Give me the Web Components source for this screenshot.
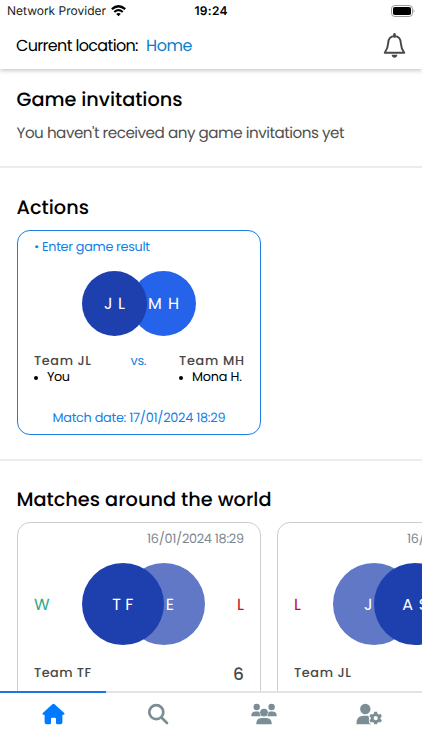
<!DOCTYPE html>
<html lang="en">
<head>
<meta charset="utf-8">
<meta name="viewport" content="width=device-width, initial-scale=1">
<title>Home</title>
<style>
  html, body {
    margin: 0;
    height: 100%;
    overflow: hidden;
    background: #fff;
  }
  body {
    font-family: Poppins, Inter, "Open Sans", sans-serif;
    text-rendering: geometricPrecision;
    color: #000;
  }
</style>
</head>
<body>
<home-screen></home-screen>

<script>
// Text line tracked out (or in) to a given width
class TextLine extends HTMLElement {
  constructor() {
    super();
    this.attachShadow({ mode: 'open' });
    this.shadowRoot.innerHTML = `
      <style>
        :host { display: block; flex: none; }
        span { display: block; width: max-content; white-space: pre; }
      </style>
      <span><slot></slot></span>
    `;
  }

  connectedCallback() {
    const width = parseFloat(this.getAttribute('width'));
    const span = this.shadowRoot.querySelector('span');
    const count = this.textContent.length;
    if (!width || count < 2) return;
    const spacing = (width - span.getBoundingClientRect().width) / (count - 1);
    span.style.letterSpacing = `${spacing}px`;
    span.style.marginRight = `${-spacing}px`;
  }
}

class StatusBar extends HTMLElement {
  connectedCallback() {
    this.attachShadow({ mode: 'open' }).innerHTML = `
      <style>
        :host {
          display: grid;
          grid-template-columns: 1fr auto 1fr;
          align-items: center;
          height: 22px;
          padding: 0 7px 0 7px;
          font-family: Inter, sans-serif;
          font-size: 12px;
          line-height: 22px;
        }
        .network { display: flex; align-items: center; gap: 5px; color: #222; }
        .time { font-weight: 600; }
        .battery { justify-self: end; }
        svg { display: block; }
      </style>
      <div class="network">
        <text-line width="99">Network Provider</text-line>
        <svg width="15" height="12" viewBox="0 0 15 12" fill="none" stroke="#000" stroke-width="2.2">
          <path d="M.8 4.2Q7.5-1.7 14.2 4.2M3.3 7Q7.5 3.4 11.7 7"/>
          <path d="M5.2 8.9Q7.5 7 9.8 8.9L7.5 11.3Z" fill="#000" stroke="none"/>
        </svg>
      </div>
      <text-line class="time" width="33">19:24</text-line>
      <svg class="battery" width="24" height="12" viewBox="0 0 24 12">
        <rect x=".5" y=".5" width="21" height="11" rx="3.3" fill="#fff" stroke="#999"/>
        <rect x="2" y="2" width="18" height="8" rx="1.8"/>
        <path d="M22.6 4.2Q24.4 6 22.6 7.8Z" fill="#999"/>
      </svg>
    `;
  }
}
customElements.define('status-bar', StatusBar);

class LocationBar extends HTMLElement {
  connectedCallback() {
    this.attachShadow({ mode: 'open' }).innerHTML = `
      <style>
        :host {
          display: flex;
          align-items: center;
          height: 47px;
          padding: 0 16px 0 16px;
          font-size: 16px;
          line-height: 46px;
          box-shadow: 0 2px 4px rgba(0, 0, 0, .2);
          clip-path: inset(0 0 -8px 0);
          position: relative;
          background: #fff;
        }
        .place { margin-left: 7.5px; color: #0b7dcb; }
        svg { margin-left: auto; margin-top: 1px; }
      </style>
      <text-line width="122.5">Current location:</text-line>
      <text-line class="place" width="46.5">${this.getAttribute('place')}</text-line>
      <svg width="23" height="26" viewBox="0 0 24 26" fill="none" stroke="#484848" stroke-width="2">
        <path d="M12 2.7C7.8 2.7 5.6 5.8 5.4 10C5.2 15 4 17 1.8 20H22.2C20 17 18.8 15 18.6 10C18.4 5.8 16.2 2.7 12 2.7Z" stroke-linejoin="round"/>
        <path d="M12 .8V3" stroke-width="2.6" stroke-linecap="round"/>
        <path d="M9 22.2H15Q14.5 25.2 12 25.2T9 22.2Z" fill="#484848" stroke="none"/>
      </svg>
    `;
  }
}
customElements.define('location-bar', LocationBar);

class PageSection extends HTMLElement {
  connectedCallback() {
    const width = this.getAttribute('heading-width');
    this.attachShadow({ mode: 'open' }).innerHTML = `
      <style>
        :host { display: block; padding: 17px 0 0 17px; overflow: hidden; box-sizing: border-box; }
        :host([divided]) { border-bottom: 2px solid #ececec; }
        .heading { margin-left: -.5px; font-size: 19.3px; font-weight: 500; line-height: 28px; }
      </style>
      <text-line class="heading" width="${width}">${this.getAttribute('heading')}</text-line>
      <slot></slot>
    `;
  }
}
customElements.define('page-section', PageSection);

// Two overlapping initials circles; front="right" puts the second one on top
class TeamBadges extends HTMLElement {
  connectedCallback() {
    const [left, right] = this.getAttribute('initials').split(',');
    const [leftWidth, rightWidth] = this.getAttribute('widths').split(',');
    this.attachShadow({ mode: 'open' }).innerHTML = `
      <style>
        :host {
          --size: 65px;
          --overlap: 16px;
          display: flex;
          font-size: 16px;
          color: #fff;
        }
        .badge {
          width: var(--size);
          height: var(--size);
          box-sizing: border-box;
          border-radius: 50%;
          display: flex;
          align-items: center;
          justify-content: center;
        }
        .left { z-index: 1; padding-left: var(--left-shift, 0); padding-right: var(--left-inset, 0); background: var(--left, #1e3fae); }
        .right { margin-left: calc(-1 * var(--overlap)); padding-left: var(--right-shift, 0); background: var(--right, #2563eb); }
        :host([front="right"]) .right { z-index: 2; }
      </style>
      <div class="badge left"><text-line width="${leftWidth}">${left}</text-line></div>
      <div class="badge right"><text-line width="${rightWidth}">${right}</text-line></div>
    `;
  }
}
customElements.define('team-badges', TeamBadges);

class ActionCard extends HTMLElement {
  connectedCallback() {
    this.attachShadow({ mode: 'open' }).innerHTML = `
      <style>
        :host {
          display: flex;
          flex-direction: column;
          box-sizing: border-box;
          width: 244px;
          height: 205px;
          margin-top: 8px;
          padding: 8px 16px 0;
          border: 1px solid #1b7de0;
          border-radius: 13px;
          font-size: 12.8px;
          line-height: 18px;
        }
        .blue { color: #147fe8; }
        team-badges { align-self: center; margin-top: 14px; }
        .teams { display: flex; justify-content: space-between; margin-top: 17px; }
        .name { font-weight: 500; color: #484848; }
        .player { display: flex; align-items: center; gap: 9px; line-height: 16px; margin-top: -1px; }
        .player::before { content: ""; width: 4px; height: 4px; border-radius: 50%; background: #000; }
        .versus { margin-right: -7px; }
        .date { align-self: center; margin-top: 24px; }
      </style>
      <text-line class="blue" width="116">• Enter game result</text-line>
      <team-badges initials="J L,M H" widths="21,31"></team-badges>
      <div class="teams">
        <div>
          <text-line class="name" width="57">Team JL</text-line>
          <div class="player"><text-line width="23">You</text-line></div>
        </div>
        <text-line class="blue versus" width="16">vs.</text-line>
        <div>
          <text-line class="name" width="65">Team MH</text-line>
          <div class="player"><text-line width="50">Mona H.</text-line></div>
        </div>
      </div>
      <text-line class="blue date" width="173">Match date: 17/01/2024 18:29</text-line>
    `;
  }
}
customElements.define('action-card', ActionCard);

class MatchCard extends HTMLElement {
  connectedCallback() {
    const attr = name => this.getAttribute(name);
    const rightWins = attr('front') === 'right';
    this.attachShadow({ mode: 'open' }).innerHTML = `
      <style>
        :host {
          display: block;
          flex: none;
          box-sizing: border-box;
          width: 244px;
          height: 205px;
          padding: 8px 16px 0;
          border: 1px solid #cdcdcd;
          border-radius: 13px;
        }
        .date { display: flex; justify-content: flex-end; color: #7d8790; font-size: 12.8px; line-height: 18px; }
        .result { display: flex; justify-content: space-between; align-items: center; margin-top: 14px; font-size: 16px; }
        .W { color: #2fa886; }
        .L { color: #c0102f; }
        team-badges {
          --size: 82px;
          --overlap: 41px;
          --left: ${rightWins ? '#6178c6' : '#1e3fae'};
          --right: ${rightWins ? '#1e3fae' : '#6178c6'};
          --left-inset: ${rightWins ? '12px' : '0'};
          --right-shift: ${rightWins ? '0' : '12px'};
        }
        .score { display: flex; justify-content: space-between; align-items: center; margin-top: 16px; line-height: 24px; color: #484848; }
        .name { font-size: 12.8px; font-weight: 500; margin-top: 1px; }
        .goals { font-size: 17px; font-weight: 500; }
      </style>
      <div class="date"><text-line width="97">16/01/2024 18:29</text-line></div>
      <div class="result">
        <text-line class="${attr('left')}">${attr('left')}</text-line>
        <team-badges front="${attr('front')}" initials="${attr('initials')}" widths="${attr('widths')}"></team-badges>
        <text-line class="${attr('right')}">${attr('right')}</text-line>
      </div>
      <div class="score">
        <text-line class="name" width="57">${attr('team')}</text-line>
        <text-line class="goals">${attr('goals')}</text-line>
      </div>
    `;
  }
}
customElements.define('match-card', MatchCard);

class TabBar extends HTMLElement {
  connectedCallback() {
    this.attachShadow({ mode: 'open' }).innerHTML = `
      <style>
        :host { display: grid; grid-template-columns: repeat(4, 1fr); height: 59px; background: #fff; }
        div { border-top: 2px solid #e2e3e5; display: flex; justify-content: center; padding-top: 10px; color: #7b8e95; }
        .active { border-color: #1778e3; color: #007bff; }
        svg { display: block; fill: currentColor; }
      </style>
      <div class="active">
        <svg width="24" height="22" viewBox="0 0 24 22">
          <path d="M12.5 .8Q13.1.8 13.6 1.3L23.2 10Q24 11 23 11.7H21.4V19.2Q21.4 21.3 19.4 21.3H16.2Q15 21.3 15 20V16Q15 14.8 13.8 14.8H11.2Q10 14.8 10 16V20Q10 21.3 8.8 21.3H5.6Q3.6 21.3 3.6 19.2V11.7H2Q1 11 1.8 10L11.4 1.3Q11.9.8 12.5.8Z"/>
        </svg>
      </div>
      <div>
        <svg width="22" height="22" viewBox="0 0 22 22">
          <path d="M9.3 2.2A7 7 0 1 1 9.3 16.2A7 7 0 1 1 9.3 2.2ZM14.2 14.2L20 20" fill="none" stroke="currentColor" stroke-width="2.7" stroke-linecap="round"/>
        </svg>
      </div>
      <div>
        <svg width="26" height="22" viewBox="0 0 26 22">
          <circle cx="5.7" cy="4" r="3.2"/><circle cx="20.6" cy="4" r="3.2"/>
          <path d="M.2 13.2Q.2 8.6 4.6 8.6H6.9Q8 8.6 8.6 9.1Q8.3 11.7 10.1 13.2ZM25.8 13.2Q25.8 8.6 21.4 8.6H19.1Q18 8.6 17.4 9.1Q17.7 11.7 15.9 13.2Z"/>
          <circle cx="13" cy="9.6" r="3.9"/>
          <path d="M5.2 21.2Q5.2 14.9 10.6 14.9H15.4Q20.8 14.9 20.8 21.2Z"/>
        </svg>
      </div>
      <div>
        <svg width="26" height="22" viewBox="0 0 26 22">
          <circle cx="9.3" cy="6" r="5.2"/>
          <path d="M.5 21.3V19.7Q.9 12.8 7.5 12.8H11.5Q12.3 12.8 12.7 13Q12.1 14.3 13.3 15.2Q12 17.6 13.1 19.4Q13.8 20.7 15.3 21.3Z"/>
          <path fill-rule="evenodd" d="M18.3 8.8H21L21.5 10.7L22.7 11.4L24.6 10.9L25.9 13.2L24.5 14.5V16L25.9 17.3L24.6 19.5L22.7 19L21.5 19.7L21 21.3H18.3L17.8 19.7L16.6 19L14.7 19.5L13.4 17.3L14.8 16V14.5L13.4 13.2L14.7 10.9L16.6 11.4L17.8 10.7ZM19.7 13.1A2.1 2.1 0 1 0 19.7 17.3A2.1 2.1 0 1 0 19.7 13.1Z"/>
        </svg>
      </div>
    `;
  }
}
customElements.define('tab-bar', TabBar);

class HomeScreen extends HTMLElement {
  connectedCallback() {
    this.attachShadow({ mode: 'open' }).innerHTML = `
      <style>
        :host { display: flex; flex-direction: column; height: 100vh; overflow: hidden; }
        main { flex: 1; min-height: 0; overflow: hidden; }
        .invitations { height: 99px; padding-top: 17px; }
        .actions { height: 293px; padding-top: 26px; }
        .matches { padding-top: 25px; }
        .empty { margin: 9px 0 0 -.5px; font-size: 15.2px; line-height: 22px; color: #505050; }
        .carousel { display: flex; gap: 16px; margin-top: 8px; overflow: hidden; }
      </style>
      <status-bar></status-bar>
      <location-bar place="Home"></location-bar>
      <main>
        <page-section class="invitations" heading="Game invitations" heading-width="166" divided>
          <text-line class="empty" width="328">You haven't received any game invitations yet</text-line>
        </page-section>
        <page-section class="actions" heading="Actions" heading-width="72.5" divided>
          <action-card></action-card>
        </page-section>
        <page-section class="matches" heading="Matches around the world" heading-width="255">
          <div class="carousel">
            <match-card left="W" right="L" front="left" initials="T F,E" widths="21,7" team="Team TF" goals="6"></match-card>
            <match-card left="L" right="W" front="right" initials="J,A S" widths="7,26" team="Team JL" goals="2"></match-card>
          </div>
        </page-section>
      </main>
      <tab-bar></tab-bar>
    `;
  }
}
customElements.define('home-screen', HomeScreen);

// Defined last so the lines are measured with their parents' styles in place
customElements.define('text-line', TextLine);
</script>
</body>
</html>
